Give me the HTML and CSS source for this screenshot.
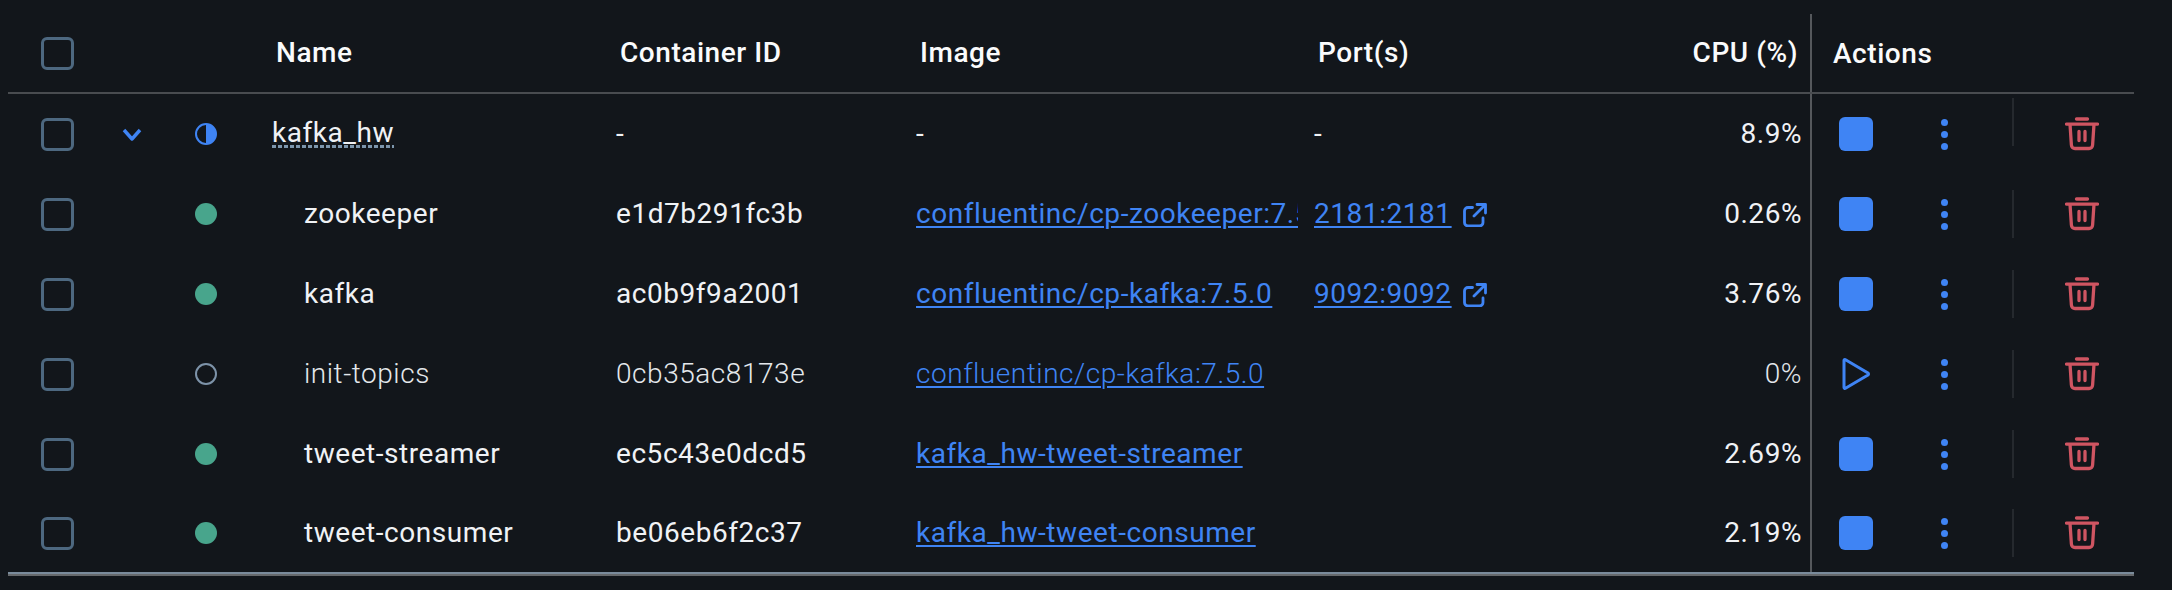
FILE: index.html
```html
<!DOCTYPE html>
<html lang="en">
<head>
  <meta charset="UTF-8" />
  <title>Containers</title>
  <link rel="stylesheet" href="styles.css">
</head>
<body>
  <svg class="defs" width="0" height="0">
    <symbol id="i-trash" viewBox="0 0 34 34">
      <path d="M11.500 2h11M1.500 7.200h31M5 7.200l1.400 20.800a3.600 3.600 0 0 0 3.600 3.500h14a3.600 3.600 0 0 0 3.600-3.500L29 7.200M14 14.500v9M20 14.500v9" fill="none" stroke="currentColor" stroke-width="3.300" stroke-linecap="round" stroke-linejoin="round"/>
    </symbol>
    <symbol id="i-ext" viewBox="0 0 24 24">
      <path d="M9.500 4.500H5A3.500 3.500 0 0 0 1.500 8v11.500A3.500 3.500 0 0 0 5 23h11.500a3.500 3.500 0 0 0 3.500-3.500V15M14 1.500h8.500V10M22 2L11 13" fill="none" stroke="currentColor" stroke-width="2.800" stroke-linecap="round" stroke-linejoin="round"/>
    </symbol>
  </svg>

  <div class="table">
    <div class="row head">
      <div class="c-check"><span class="box"></span></div>
      <div class="c-toggle"></div>
      <div class="c-status"></div>
      <div class="c-name">Name</div>
      <div class="c-id">Container ID</div>
      <div class="c-image">Image</div>
      <div class="c-ports">Port(s)</div>
      <div class="c-cpu">CPU (%)</div>
      <div class="c-actions">Actions</div>
    </div>

    <div class="row group">
      <div class="c-check"><span class="box"></span></div>
      <div class="c-toggle">
        <svg class="chevron" width="20" height="13" viewBox="0 0 20 13"><path d="M2 2l8 9 8-9" fill="none" stroke="currentColor" stroke-width="3.400" stroke-linejoin="round"/></svg>
      </div>
      <div class="c-status">
        <svg class="half" width="22" height="22" viewBox="0 0 22 22"><circle cx="11" cy="11" r="10" fill="none" stroke="currentColor" stroke-width="2"/><path d="M11 1a10 10 0 0 1 0 20z" fill="currentColor"/></svg>
      </div>
      <div class="c-name"><span class="compose">kafka_hw</span></div>
      <div class="c-id">-</div>
      <div class="c-image">-</div>
      <div class="c-ports">-</div>
      <div class="c-cpu">8.9%</div>
      <div class="c-actions">
        <span class="act-main"><span class="stop"></span></span>
        <span class="dots"><i></i><i></i><i></i></span>
        <span class="sep"></span>
        <span class="act-del"><svg class="trash" width="34" height="34"><use href="#i-trash"/></svg></span>
      </div>
    </div>

    <div class="row">
      <div class="c-check"><span class="box"></span></div>
      <div class="c-toggle"></div>
      <div class="c-status"><span class="dot"></span></div>
      <div class="c-name child">zookeeper</div>
      <div class="c-id">e1d7b291fc3b</div>
      <div class="c-image"><a class="link">confluentinc/cp-zookeeper:7.5.0</a></div>
      <div class="c-ports"><a class="link">2181:2181</a><svg class="ext" width="24" height="24"><use href="#i-ext"/></svg></div>
      <div class="c-cpu">0.26%</div>
      <div class="c-actions">
        <span class="act-main"><span class="stop"></span></span>
        <span class="dots"><i></i><i></i><i></i></span>
        <span class="sep"></span>
        <span class="act-del"><svg class="trash" width="34" height="34"><use href="#i-trash"/></svg></span>
      </div>
    </div>

    <div class="row">
      <div class="c-check"><span class="box"></span></div>
      <div class="c-toggle"></div>
      <div class="c-status"><span class="dot"></span></div>
      <div class="c-name child">kafka</div>
      <div class="c-id">ac0b9f9a2001</div>
      <div class="c-image"><a class="link">confluentinc/cp-kafka:7.5.0</a></div>
      <div class="c-ports"><a class="link">9092:9092</a><svg class="ext" width="24" height="24"><use href="#i-ext"/></svg></div>
      <div class="c-cpu">3.76%</div>
      <div class="c-actions">
        <span class="act-main"><span class="stop"></span></span>
        <span class="dots"><i></i><i></i><i></i></span>
        <span class="sep"></span>
        <span class="act-del"><svg class="trash" width="34" height="34"><use href="#i-trash"/></svg></span>
      </div>
    </div>

    <div class="row stopped">
      <div class="c-check"><span class="box"></span></div>
      <div class="c-toggle"></div>
      <div class="c-status"><span class="dot off"></span></div>
      <div class="c-name child">init-topics</div>
      <div class="c-id">0cb35ac8173e</div>
      <div class="c-image"><a class="link">confluentinc/cp-kafka:7.5.0</a></div>
      <div class="c-ports"></div>
      <div class="c-cpu">0%</div>
      <div class="c-actions">
        <span class="act-main">
          <svg class="play" width="34" height="34" viewBox="0 0 34 34"><path d="M5 3.500v27a1 1 0 0 0 1.500.8L29 18a1.200 1.200 0 0 0 0-2L6.500 2.700A1 1 0 0 0 5 3.500z" fill="none" stroke="currentColor" stroke-width="3" stroke-linejoin="round"/></svg>
        </span>
        <span class="dots"><i></i><i></i><i></i></span>
        <span class="sep"></span>
        <span class="act-del"><svg class="trash" width="34" height="34"><use href="#i-trash"/></svg></span>
      </div>
    </div>

    <div class="row">
      <div class="c-check"><span class="box"></span></div>
      <div class="c-toggle"></div>
      <div class="c-status"><span class="dot"></span></div>
      <div class="c-name child">tweet-streamer</div>
      <div class="c-id">ec5c43e0dcd5</div>
      <div class="c-image"><a class="link">kafka_hw-tweet-streamer</a></div>
      <div class="c-ports"></div>
      <div class="c-cpu">2.69%</div>
      <div class="c-actions">
        <span class="act-main"><span class="stop"></span></span>
        <span class="dots"><i></i><i></i><i></i></span>
        <span class="sep"></span>
        <span class="act-del"><svg class="trash" width="34" height="34"><use href="#i-trash"/></svg></span>
      </div>
    </div>

    <div class="row last">
      <div class="c-check"><span class="box"></span></div>
      <div class="c-toggle"></div>
      <div class="c-status"><span class="dot"></span></div>
      <div class="c-name child">tweet-consumer</div>
      <div class="c-id">be06eb6f2c37</div>
      <div class="c-image"><a class="link">kafka_hw-tweet-consumer</a></div>
      <div class="c-ports"></div>
      <div class="c-cpu">2.19%</div>
      <div class="c-actions">
        <span class="act-main"><span class="stop"></span></span>
        <span class="dots"><i></i><i></i><i></i></span>
        <span class="sep"></span>
        <span class="act-del"><svg class="trash" width="34" height="34"><use href="#i-trash"/></svg></span>
      </div>
    </div>
  </div>
</body>
</html>
```

FILE: styles.css
```css
html, body { margin: 0; height: 590px; overflow: hidden; background: #12161b; }
body { padding: 14px 0 0 8px; box-sizing: border-box; font-family: Roboto, sans-serif; font-size: 28px; color: #f0f2f5; letter-spacing: 0.55px; }
.defs { position: absolute; }

.table { width: 2126px; border-bottom: 2px solid #66696c; }
.row { display: grid; grid-template-columns: 92px 64px 108px 344px 300px 397px 1fr 240px 324px; height: 80px; align-items: center; }
.row > div { display: flex; align-items: center; height: 100%; min-width: 0; box-sizing: border-box; }
.row.last { height: 78px; border-bottom: 2px solid #7a8b9b; }

/* text sits 1px above the row centre */
.c-name, .c-id, .c-image, .c-ports, .c-cpu { padding-bottom: 2px; }

.head { height: 78px; border-bottom: 2px solid #494c50; font-weight: 500; color: #fafbfc; }
.head .c-name, .head .c-id, .head .c-image { padding-left: 4px; }
.head .c-ports { padding-left: 5px; }
.head .c-cpu { padding-right: 12px; }
.head .c-actions { padding-left: 21px; }

.c-check { padding-left: 33px; }
.box { width: 33px; height: 33px; box-sizing: border-box; border: 3px solid #4d6880; border-radius: 6px; }
.c-toggle { padding-left: 22px; color: #3f84f4; }
.c-status { padding-left: 31px; }
.dot { width: 22px; height: 22px; box-sizing: border-box; border-radius: 50%; background: #48a58c; }
.dot.off { background: none; border: 2px solid #7d93a9; }
.half { color: #3f84f4; }

.child { padding-left: 32px; }
.compose { display: inline-block; line-height: 30px; background: repeating-linear-gradient(90deg, #7d96ad 0 4px, transparent 4px 6px) no-repeat bottom / 100% 3px; }
.link { color: #3f84f4; text-decoration: underline; text-decoration-thickness: 2px; text-underline-offset: 3px; white-space: nowrap; }
.c-image { overflow: hidden; margin-right: 15px; }
.c-ports { padding-left: 1px; }
.ext { color: #3f84f4; margin: 4px 0 0 11px; }
.c-cpu { justify-content: flex-end; padding-right: 8px; }
.c-actions { border-left: 2px solid #55585c; }

.stopped { font-weight: 300; color: #e4e8ec; }

.act-main { width: 64px; padding-left: 27px; display: flex; }
.stop { width: 34px; height: 34px; border-radius: 6px; background: #3f84f4; }
.play { color: #3f84f4; }
.dots { width: 109px; display: flex; flex-direction: column; align-items: center; gap: 5px; padding-right: 26px; box-sizing: border-box; }
.dots i { width: 7px; height: 7px; border-radius: 50%; background: #3f84f4; }
.sep { width: 2px; height: 48px; background: #25292e; }
.group .sep { margin-bottom: 24px; }
.act-del { flex: 1; display: flex; align-items: center; padding-left: 51px; }
.trash { color: #cf5562; }
```
